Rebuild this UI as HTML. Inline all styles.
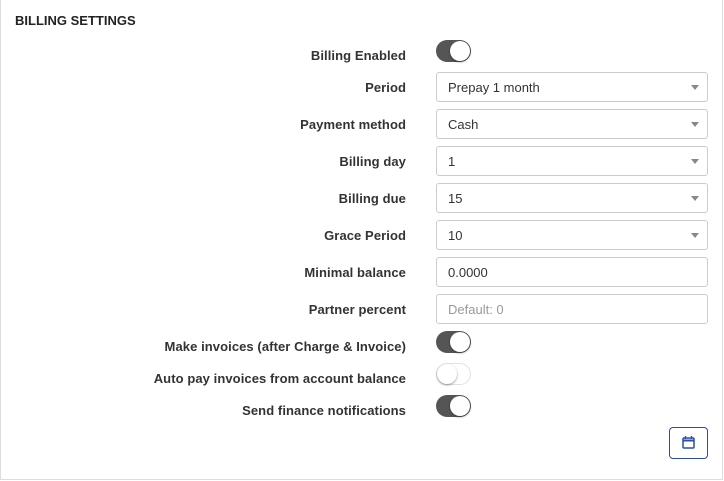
<!DOCTYPE html>
<html><head><style>
body{margin:0;width:724px;height:481px;background:#fff;font-family:"Liberation Sans",sans-serif;color:#333;position:relative;overflow:hidden}
.card{position:absolute;left:0;top:-1px;width:721px;height:480px;border:1px solid #ddd;border-top:none}
.title{position:absolute;left:15px;top:13px;font-size:13px;font-weight:bold;color:#222}
.lab{position:absolute;right:318px;font-size:13px;font-weight:bold;color:#333;text-align:right;white-space:nowrap;letter-spacing:0.08px}
.inp{position:absolute;left:436px;height:28px;border:1px solid #ccc;border-radius:3px;font-size:13px;line-height:30px;padding-left:11px;box-sizing:content-box;width:259px}
.inp.sel::after{content:"";position:absolute;right:8px;top:12px;border-left:4px solid transparent;border-right:4px solid transparent;border-top:5px solid #888}
.tg{position:absolute;left:436px;width:35px;height:22px;border-radius:11px;background:#555}
.tg::after{content:"";position:absolute;right:1px;top:1px;width:20px;height:20px;border-radius:50%;background:#fff;box-shadow:0 1px 2px rgba(0,0,0,.4)}
.tg.off{background:#fff;border:1px solid #e2e2e2;width:33px;height:20px}
.tg.off::after{left:0;top:0;right:auto}
.btn{position:absolute;left:669px;top:427px;width:37px;height:30px;border:1px solid #2a4da8;border-radius:4px}
</style></head><body>
<div class="card"></div>
<div class="title">BILLING SETTINGS</div>
<div class="lab" style="top:48px">Billing Enabled</div><div class="tg" style="top:40px"></div>
<div class="lab" style="top:80px">Period</div><div class="inp sel" style="top:72px">Prepay 1 month</div>
<div class="lab" style="top:117px">Payment method</div><div class="inp sel" style="top:109px">Cash</div>
<div class="lab" style="top:154px">Billing day</div><div class="inp sel" style="top:146px">1</div>
<div class="lab" style="top:191px">Billing due</div><div class="inp sel" style="top:183px">15</div>
<div class="lab" style="top:228px">Grace Period</div><div class="inp sel" style="top:220px">10</div>
<div class="lab" style="top:265px">Minimal balance</div><div class="inp" style="top:257px">0.0000</div>
<div class="lab" style="top:302px">Partner percent</div><div class="inp" style="top:294px;color:#999">Default: 0</div>
<div class="lab" style="top:339px">Make invoices (after Charge &amp; Invoice)</div><div class="tg" style="top:331px"></div>
<div class="lab" style="top:371px">Auto pay invoices from account balance</div><div class="tg off" style="top:363px"></div>
<div class="lab" style="top:403px">Send finance notifications</div><div class="tg" style="top:395px"></div>
<div class="btn"><svg width="37" height="30" viewBox="0 0 37 30"><rect x="13" y="10" width="11" height="10" rx="1" fill="none" stroke="#2a4da8" stroke-width="1.5"/><line x1="13" y1="12.5" x2="24" y2="12.5" stroke="#2a4da8" stroke-width="2"/><line x1="15.5" y1="8" x2="15.5" y2="11" stroke="#2a4da8" stroke-width="1.3"/><line x1="21.5" y1="8" x2="21.5" y2="11" stroke="#2a4da8" stroke-width="1.3"/></svg></div>
</body></html>
